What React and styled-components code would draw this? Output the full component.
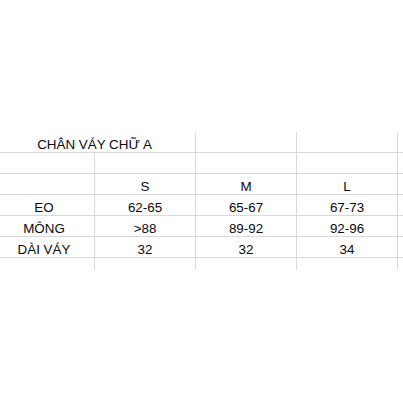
import styled, { createGlobalStyle } from 'styled-components'

const GlobalStyle = createGlobalStyle`
  html, body {
    margin: 0;
    padding: 0;
    background: #fff;
  }
`

const sizes = ['S', 'M', 'L']

const rows = [
  { label: 'EO', values: ['62-65', '65-67', '67-73'] },
  { label: 'MÔNG', values: ['>88', '89-92', '92-96'] },
  { label: 'DÀI VÁY', values: ['32', '32', '34'] },
]

const App = () => {
  return (
    <Page>
      <GlobalStyle />
      <Sheet>
        <Cell $span={2}>CHÂN VÁY CHỮ A</Cell>
        <Cell />
        <Cell />
        <Cell $last />

        <Cell />
        <Cell />
        <Cell />
        <Cell />
        <Cell $last />

        <Cell />
        {sizes.map((s) => (
          <Cell key={s}>{s}</Cell>
        ))}
        <Cell $last />

        {rows.map((row) => (
          <Row key={row.label} row={row} />
        ))}

        <Tail />
        <Tail />
        <Tail />
        <Tail />
        <Tail $last />
      </Sheet>
    </Page>
  )
}

const Row = ({ row }) => (
  <>
    <Cell>{row.label}</Cell>
    {row.values.map((v, i) => (
      <Cell key={i}>{v}</Cell>
    ))}
    <Cell $last />
  </>
)

const Page = styled.div`
  width: 403px;
  height: 403px;
  overflow: hidden;
  padding-top: 132px;
  box-sizing: border-box;
  background: #fff;
`

const Sheet = styled.div`
  display: grid;
  grid-template-columns: repeat(4, 101px) 1fr;
  grid-auto-rows: 21px;
  width: 415px;
  margin-left: -6px;
  font-family: 'Liberation Sans', Arial, sans-serif;
  font-size: 13.4px;
  color: #0a0a0a;
`

const Cell = styled.div`
  grid-column: span ${(p) => p.$span || 1};
  box-sizing: border-box;
  display: flex;
  align-items: flex-end;
  justify-content: center;
  line-height: 15px;
  white-space: nowrap;
  border-bottom: 1px solid #d9d9d9;
  border-right: ${(p) => (p.$last ? 'none' : '1px solid #d9d9d9')};
`

const Tail = styled.div`
  height: 12px;
  border-right: ${(p) => (p.$last ? 'none' : '1px solid #d9d9d9')};
`

export default App
